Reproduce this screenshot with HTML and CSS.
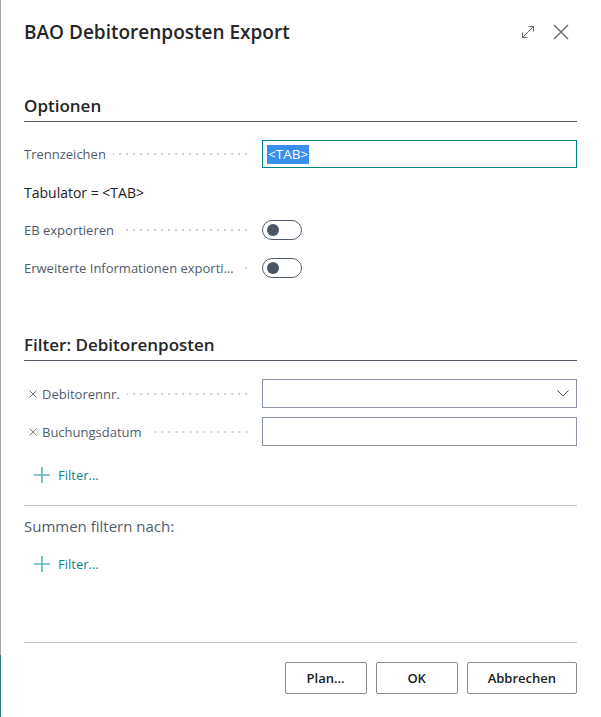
FILE: index.html
```html
<!DOCTYPE html>
<html>
<head>
  <meta charset="UTF-8">
  <meta name="viewport" content="width=device-width, initial-scale=1.0">
  <link rel="stylesheet" href="styles.css">
</head>
<body>

<div class="edge"></div>

<div class="dialog">

    <div class="dialog-header">
        <h1 class="dialog-title">BAO Debitorenposten Export</h1>
        <div class="header-icons">
            <svg class="icon" width="16" height="16" viewBox="0 0 16 16">
                <path d="M2.5 13.5 L13.5 2.5 M8.5 2.5 H13.5 V7.5 M2.5 8.5 V13.5 H7.5" fill="none" stroke="#6b6b6b" stroke-width="1"/>
            </svg>
            <svg class="icon" width="16" height="16" viewBox="0 0 16 16">
                <path d="M1 1 L15 15 M15 1 L1 15" fill="none" stroke="#666" stroke-width="1.4"/>
            </svg>
        </div>
    </div>

    <div class="dialog-body">

        <h2 class="group-title">Optionen</h2>

        <div class="fields">
            <div class="field">
                <div class="label"><span class="label-text">Trennzeichen</span><span class="leader"></span></div>
                <div class="input focused"><span class="selected">&lt;TAB&gt;</span></div>
            </div>

            <div class="field">
                <div class="note">Tabulator = &lt;TAB&gt;</div>
            </div>

            <div class="field">
                <div class="label"><span class="label-text">EB exportieren</span><span class="leader"></span></div>
                <div><div class="toggle"><span class="knob"></span></div></div>
            </div>

            <div class="field">
                <div class="label"><span class="label-text">Erweiterte Informationen exportieren</span><span class="leader"></span></div>
                <div><div class="toggle"><span class="knob"></span></div></div>
            </div>
        </div>

        <h2 class="group-title second">Filter: Debitorenposten</h2>

        <div class="fields filters">
            <div class="field">
                <div class="label">
                    <svg class="remove" width="8" height="8" viewBox="0 0 8 8"><path d="M0.5 0.5 L7.5 7.5 M7.5 0.5 L0.5 7.5" stroke="#7a7a7a" stroke-width="1"/></svg>
                    <span class="label-text">Debitorennr.</span><span class="leader"></span>
                </div>
                <div class="input plain">
                    <svg class="chevron" width="12" height="7" viewBox="0 0 12 7"><polyline points="0.5,0.5 6,6 11.5,0.5" fill="none" stroke="#444" stroke-width="1"/></svg>
                </div>
            </div>

            <div class="field">
                <div class="label">
                    <svg class="remove" width="8" height="8" viewBox="0 0 8 8"><path d="M0.5 0.5 L7.5 7.5 M7.5 0.5 L0.5 7.5" stroke="#7a7a7a" stroke-width="1"/></svg>
                    <span class="label-text">Buchungsdatum</span><span class="leader"></span>
                </div>
                <div class="input plain"></div>
            </div>
        </div>

        <div class="add-filter">
            <svg width="16" height="16" viewBox="0 0 16 16"><path d="M8 0 V16 M0 8 H16" stroke="#5db4b4" stroke-width="1.6"/></svg>
            <span>Filter...</span>
        </div>

        <div class="totals">
            <div class="totals-title">Summen filtern nach:</div>
            <div class="add-filter">
                <svg width="16" height="16" viewBox="0 0 16 16"><path d="M8 0 V16 M0 8 H16" stroke="#5db4b4" stroke-width="1.6"/></svg>
                <span>Filter...</span>
            </div>
        </div>

    </div>

    <div class="dialog-footer">
        <button class="btn">Plan...</button>
        <button class="btn">OK</button>
        <button class="btn">Abbrechen</button>
    </div>

</div>

</body>
</html>
```

FILE: styles.css
```css
body {
    font-family: "Segoe UI", "Open Sans", "Noto Sans", sans-serif;
    font-size: 13px;
    color: #212121;
    margin: 0;
    height: 717px;
    display: flex;
    background: #fff;
}

.edge {
    width: 1px;
    background: linear-gradient(to bottom, #a6a6a6 0, #a6a6a6 655px, #2b7d80 655px);
}

.dialog {
    flex: 1;
    display: flex;
    flex-direction: column;
    padding: 0 24px 0 23px;
}

/* header */
.dialog-header {
    display: flex;
    align-items: center;
    justify-content: space-between;
    height: 24px;
    margin-top: 20px;
}

.dialog-title {
    margin: 0;
    font-size: 19px;
    font-weight: 600;
    line-height: 24px;
    color: #262626;
}

.header-icons {
    display: flex;
    gap: 17px;
    margin-right: 8px;
}

.icon {
    display: block;
}

/* body */
.dialog-body {
    flex: 1;
}

.group-title {
    margin: 50px 0 0;
    font-size: 17px;
    font-weight: 600;
    line-height: 24px;
    padding-bottom: 3px;
    border-bottom: 1px solid #4f5966;
    color: #262626;
}

.group-title.second {
    margin-top: 51px;
}

.fields {
    display: flex;
    flex-direction: column;
    gap: 10px;
    margin-top: 18px;
}

.field {
    display: grid;
    grid-template-columns: 228px 1fr;
    column-gap: 10px;
    align-items: center;
    height: 28px;
}

.filters .field {
    height: 29px;
}

.filters {
    gap: 9px;
}

.label {
    display: flex;
    align-items: center;
    min-width: 0;
    color: #505c6d;
}

.label-text {
    white-space: nowrap;
    overflow: hidden;
    text-overflow: ellipsis;
}

.leader {
    flex: 1;
    min-width: 10px;
    height: 2px;
    margin-left: 7px;
    background-image: linear-gradient(to right, #d0d0d0 2px, transparent 2px);
    background-size: 7px 2px;
    background-repeat: repeat-x;
    background-position: right center;
}

.remove {
    margin: 0 5px 0 5px;
    flex-shrink: 0;
}

.note {
    grid-column: 1 / 3;
    font-size: 14px;
    color: #212121;
}

.input {
    height: 100%;
    box-sizing: border-box;
    display: flex;
    align-items: center;
    padding: 0 4px;
    background: #fff;
}

.input.focused {
    border: 1px solid #008489;
}

.input.plain {
    border: 1px solid #8b94a3;
    justify-content: flex-end;
    padding-right: 7px;
}

.selected {
    background: #3a8ef0;
    color: #fff;
    font-size: 13.5px;
    line-height: 19px;
    padding: 0 1px;
}

.toggle {
    width: 40px;
    height: 20px;
    box-sizing: border-box;
    border: 1px solid #505c6d;
    border-radius: 10px;
    display: flex;
    align-items: center;
    padding: 0 4px;
}

.knob {
    width: 12px;
    height: 12px;
    border-radius: 50%;
    background: #4a5467;
}

.add-filter {
    display: flex;
    align-items: center;
    gap: 8px;
    height: 24px;
    margin-top: 17px;
    padding-left: 10px;
    color: #0e8787;
}

.add-filter svg {
    display: block;
}

.totals {
    margin-top: 18px;
    border-top: 1px solid #c8c8c8;
    padding-top: 10px;
}

.totals-title {
    color: #505c6d;
    font-size: 15px;
    line-height: 20px;
}

.totals .add-filter {
    margin-top: 16px;
}

/* footer */
.dialog-footer {
    display: flex;
    justify-content: flex-end;
    gap: 9px;
    border-top: 1px solid #c8c8c8;
    padding: 19px 0 23px;
}

.btn {
    height: 32px;
    min-width: 82px;
    padding: 0 20px;
    font-family: inherit;
    font-size: 13px;
    font-weight: 600;
    color: #212121;
    background: #fff;
    border: 1px solid #8a8a8a;
    border-radius: 2px;
}
```
